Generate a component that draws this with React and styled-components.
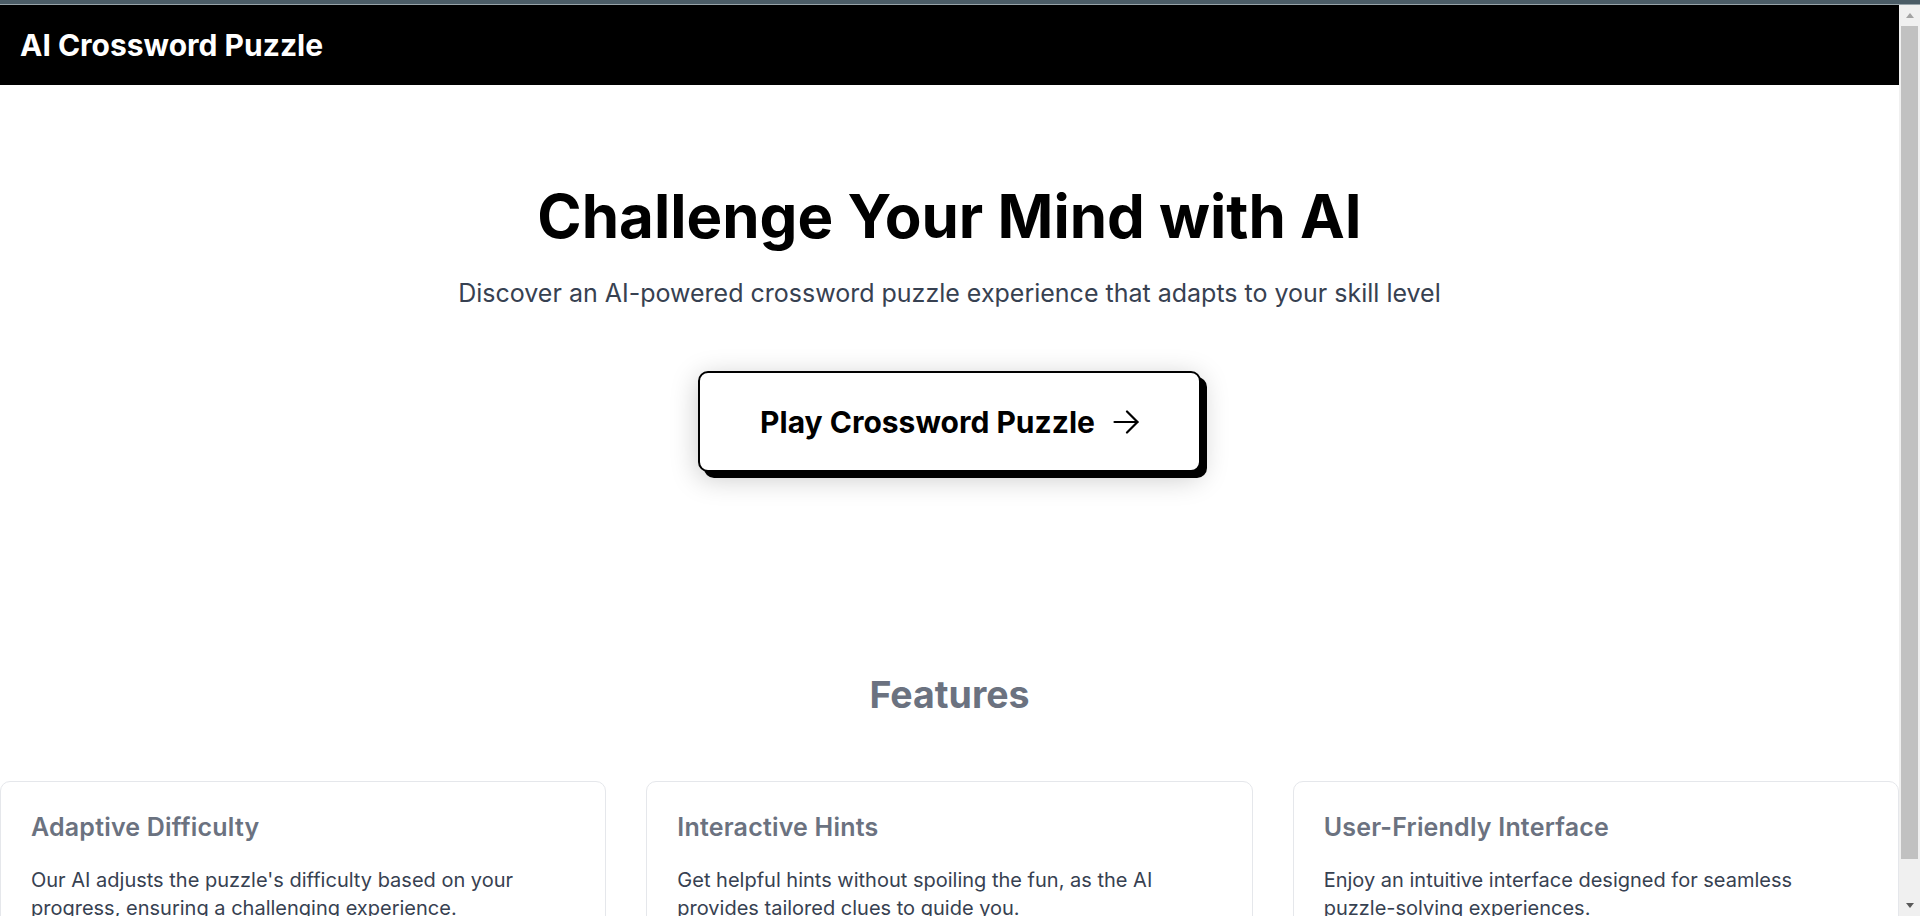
import React from "react";
import styled, { createGlobalStyle } from "styled-components";

const GlobalStyle = createGlobalStyle`
  *, *::before, *::after { box-sizing: border-box; }
  html, body { margin: 0; padding: 0; background: #ffffff; height: 100%; overflow: hidden; }
  body {
    font-family: Inter, "Noto Sans", "Liberation Sans", sans-serif;
    color: #000;
    -webkit-font-smoothing: antialiased;
  }
  #root { height: 100%; }
  h1, h2, h3, p { margin: 0; }
`;

const Window = styled.div`
  height: 100%;
  display: flex;
  flex-direction: column;
`;

const ChromeStrip = styled.div`
  flex: 0 0 5px;
  background: #4b5c66;
  border-bottom: 1px solid #97a3a9;
`;

const Frame = styled.div`
  flex: 1 1 auto;
  min-height: 0;
  display: flex;
`;

const Viewport = styled.div`
  flex: 1 1 auto;
  min-width: 0;
  overflow: hidden;
`;

const Rail = styled.div`
  flex: 0 0 21px;
  background: #f0f0f0;
  display: flex;
  flex-direction: column;
`;

const RailButton = styled.div`
  flex: 0 0 21px;
  display: flex;
  align-items: center;
  justify-content: center;
`;

const Triangle = styled.span`
  width: 0;
  height: 0;
  border-left: 4.5px solid transparent;
  border-right: 4.5px solid transparent;
  ${(p) =>
    p.$dir === "up"
      ? `border-bottom: 5px solid #a3a3a3;`
      : `border-top: 5px solid #5a5a5a;`}
`;

const RailTrack = styled.div`
  flex: 1 1 auto;
  padding: 0 2px;
`;

const RailThumb = styled.div`
  height: 95.9%;
  background: #c1c1c1;
`;

const Header = styled.header`
  height: 80px;
  background: #000;
  display: flex;
  align-items: center;
  padding: 0 20px;
`;

const Brand = styled.h1`
  color: #fff;
  font-size: 30px;
  line-height: 40px;
  font-weight: 700;
`;

const Main = styled.main`
  display: flex;
  flex-direction: column;
  align-items: center;
`;

const Hero = styled.section`
  display: flex;
  flex-direction: column;
  align-items: center;
  text-align: center;
  padding: 101px 20px 100px;
`;

const Title = styled.h2`
  font-size: 60px;
  line-height: 60px;
  font-weight: 700;
  color: #000;
`;

const Subtitle = styled.p`
  margin-top: 30px;
  font-size: 25px;
  line-height: 35px;
  color: #374151;
`;

const PlayButton = styled.button`
  margin-top: 60px;
  display: inline-flex;
  align-items: center;
  gap: 18px;
  padding: 28.5px 60px;
  background: #fff;
  border: 2px solid #000;
  border-radius: 10px;
  font-family: inherit;
  font-size: 30px;
  line-height: 40px;
  font-weight: 700;
  color: #000;
  cursor: pointer;
  box-shadow: 6px 6px 0 #000, 0 6px 28px rgba(0, 0, 0, 0.22);
`;

const Features = styled.section`
  width: 100%;
  padding-top: 100px;
  display: flex;
  flex-direction: column;
  align-items: center;
`;

const SectionTitle = styled.h2`
  font-size: 37.5px;
  line-height: 45px;
  font-weight: 700;
  color: #6b7280;
`;

const CardGrid = styled.div`
  width: 100%;
  margin-top: 64px;
  display: grid;
  grid-template-columns: repeat(3, 1fr);
  gap: 40px;
`;

const Card = styled.div`
  border: 1px solid #e5e7eb;
  border-radius: 10px;
  background: #fff;
  padding: 28px 30px 30px;
`;

const CardTitle = styled.h3`
  font-size: 25px;
  line-height: 35px;
  font-weight: 600;
  letter-spacing: 0.2px;
  color: #6b7280;
`;

const CardText = styled.p`
  margin-top: 21px;
  font-size: 20px;
  line-height: 28px;
  color: #374151;
`;

const NoWrap = styled.span`
  white-space: nowrap;
`;

const Arrow = () => (
  <svg width="26" height="24" viewBox="0 0 26 24" fill="none" stroke="#000" strokeWidth="2.2" strokeLinecap="round" strokeLinejoin="round">
    <path d="M1.5 12h23" />
    <path d="M14 1.5 24.5 12 14 22.5" />
  </svg>
);

const features = [
  {
    title: "Adaptive Difficulty",
    text: <>Our AI adjusts the puzzle's difficulty based on your progress, ensuring a challenging experience.</>,
  },
  {
    title: "Interactive Hints",
    text: <>Get helpful hints without spoiling the fun, as the AI provides tailored clues to guide you.</>,
  },
  {
    title: "User-Friendly Interface",
    text: <>Enjoy an intuitive interface designed for seamless <NoWrap>puzzle-solving</NoWrap> experiences.</>,
  },
];

export default function App() {
  return (
    <>
      <GlobalStyle />
      <Window>
        <ChromeStrip />
        <Frame>
          <Viewport>
            <Header>
              <Brand>AI Crossword Puzzle</Brand>
            </Header>
            <Main>
              <Hero>
                <Title>Challenge Your Mind with AI</Title>
                <Subtitle>
                  Discover an AI-powered crossword puzzle experience that adapts to your skill level
                </Subtitle>
                <PlayButton>
                  Play Crossword Puzzle
                  <Arrow />
                </PlayButton>
              </Hero>
              <Features>
                <SectionTitle>Features</SectionTitle>
                <CardGrid>
                  {features.map((f) => (
                    <Card key={f.title}>
                      <CardTitle>{f.title}</CardTitle>
                      <CardText>{f.text}</CardText>
                    </Card>
                  ))}
                </CardGrid>
              </Features>
            </Main>
          </Viewport>
          <Rail aria-hidden="true">
            <RailButton>
              <Triangle $dir="up" />
            </RailButton>
            <RailTrack>
              <RailThumb />
            </RailTrack>
            <RailButton>
              <Triangle $dir="down" />
            </RailButton>
          </Rail>
        </Frame>
      </Window>
    </>
  );
}
